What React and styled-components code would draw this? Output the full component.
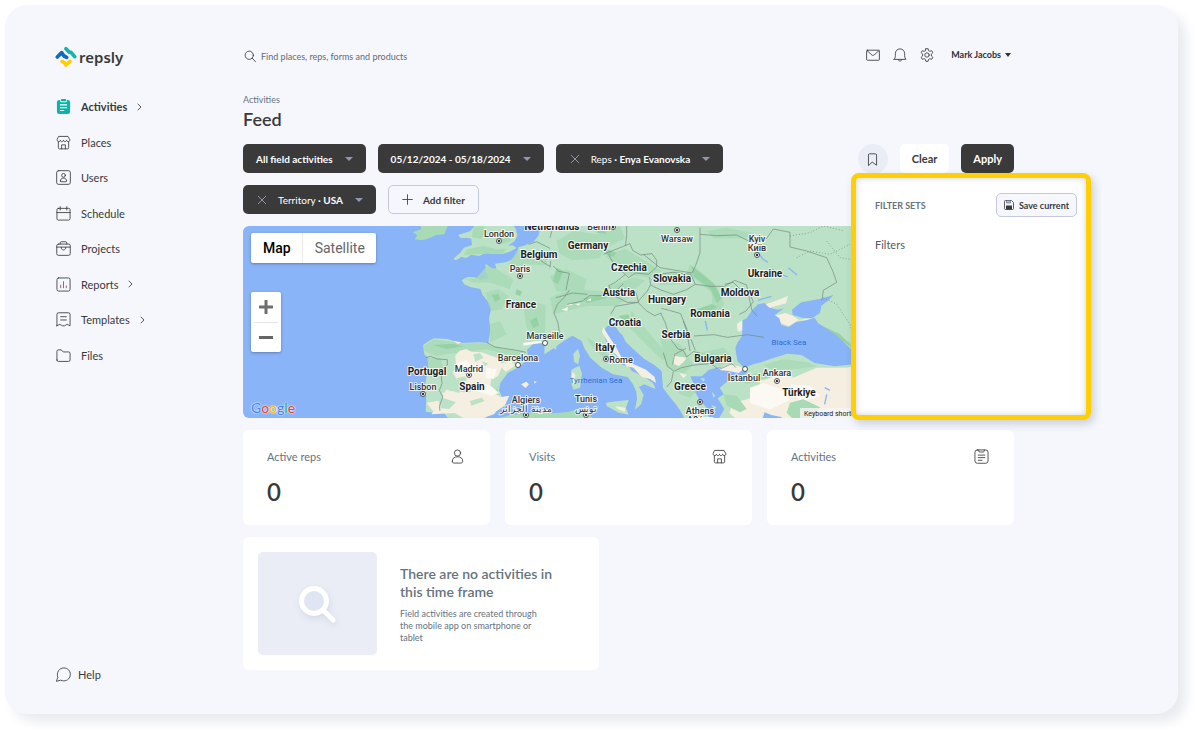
import styled, { createGlobalStyle, css } from 'styled-components'

const GlobalStyle = createGlobalStyle`
  *, *::before, *::after {
    box-sizing: border-box;
  }

  body {
    margin: 0;
    background: #ffffff;
    color: #3a3a3a;
    font-family: Lato, 'Liberation Sans', sans-serif;
    font-size: 11px;
  }

  button, input {
    font-family: inherit;
  }
`

const Page = styled.div`
  display: flex;
  min-height: 100vh;
  padding: 5px 24px 25px 5px;
`

const AppShell = styled.div`
  display: flex;
  flex: 1;
  min-width: 0;
  padding: 39px 164px 28px 50px;
  border-radius: 22px;
  background: #f5f7fd;
  box-shadow: 8px 8px 12px #e9ebf0;
`

/**
 * Sidebar
 */
const Sidebar = styled.aside`
  display: flex;
  flex-direction: column;
  width: 188px;
  flex-shrink: 0;
`

const Logo = styled.a`
  display: flex;
  align-items: center;
  gap: 2px;
  height: 25px;
  color: #3a3a3a;
  font-family: 'Noto Sans', sans-serif;
  font-size: 15px;
  font-weight: 600;
  line-height: 20px;
  text-decoration: none;
`

const NavList = styled.ul`
  display: grid;
  grid-auto-rows: 1fr;
  height: 284px;
  margin: 20px 0 0;
  padding: 0 0 0 1px;
  list-style: none;
`

const NavLink = styled.a`
  display: flex;
  align-items: center;
  height: 100%;
  gap: 10px;
  color: #3a3a3a;
  font-size: 11px;
  font-weight: ${({ $active }) => ($active ? 700 : 400)};
  text-decoration: none;
`

const HelpLink = styled(NavLink)`
  height: 24px;
  margin-top: auto;
  padding-left: 1px;
  gap: 7px;
`

const Icon = styled.svg`
  display: block;
  flex-shrink: 0;
  fill: none;
  stroke: currentColor;
  stroke-opacity: 0.85;
  stroke-linecap: round;
  stroke-linejoin: round;
`

/**
 * Main column
 */
const Main = styled.main`
  flex: 1;
  min-width: 0;
`

const TopBar = styled.header`
  display: flex;
  align-items: center;
  justify-content: space-between;
  height: 24px;
`

const SearchLabel = styled.label`
  display: flex;
  align-items: center;
  gap: 5px;
  padding-left: 1px;
  color: #3a3a3a;
`

const SearchInput = styled.input`
  width: 240px;
  padding: 0;
  border: 0;
  outline: 0;
  background: transparent;
  color: #5f6c77;
  font-size: 9px;

  &::placeholder {
    color: #5f6c77;
    opacity: 1;
  }
`

const TopActions = styled.div`
  display: flex;
  align-items: center;
  gap: 13px;
  padding: 0 1px 3px 0;
`

const IconButton = styled.button`
  display: flex;
  padding: 0;
  border: 0;
  background: none;
  color: #3a3a3a;
`

const UserButton = styled.button`
  display: flex;
  align-items: center;
  gap: 4px;
  margin-left: 4px;
  padding: 0 2px 0 0;
  border: 0;
  background: none;
  color: #2f3237;
  font-size: 9px;
  font-weight: 700;
`

const Breadcrumb = styled.div`
  margin-top: 25px;
  color: #66737e;
  font-size: 9px;
  line-height: 14px;
`

const PageTitle = styled.h1`
  margin: 0 0 13px;
  font-size: 18px;
  font-weight: 600;
  line-height: 24px;
`

const Toolbar = styled.div`
  display: flex;
  justify-content: space-between;
  align-items: flex-start;
  gap: 12px;
`

const Filters = styled.div`
  display: flex;
  flex: 1;
  flex-wrap: wrap;
  gap: 12px;
`

const Actions = styled.div`
  position: relative;
  display: flex;
  gap: 12px;
`

const variants = {
  dark: css`
    background: #3a3a3a;
    color: #ffffff;
  `,
  light: css`
    background: #ffffff;
    color: #3a3a3a;
  `,
  outline: css`
    border: 1px solid #c3c8de;
    color: #3a3a3a;
  `,
}

const Button = styled.button`
  display: flex;
  align-items: center;
  gap: 10px;
  height: 29px;
  padding: 0 12px;
  border: 0;
  border-radius: 5px;
  background: transparent;
  font-size: 11px;
  font-weight: 700;
  white-space: nowrap;
  ${({ $variant }) => variants[$variant]}
`

const FilterButton = styled(Button)`
  padding: 0 13px;
  font-size: 10px;

  svg {
    color: ${({ $variant }) => ($variant === 'dark' ? '#a4a7b8' : '#3a3a3a')};
  }
`

const FilterName = styled.span`
  font-weight: 400;
`

const Caret = styled.span`
  margin-left: ${({ $tight }) => ($tight ? 0 : '2px')};
  border: 4px solid transparent;
  border-width: ${({ $tight }) => ($tight ? '4px 3px 0' : '4px 4px 0')};
  border-top-color: ${({ $color }) => $color || '#9296ae'};
`

const RoundButton = styled(IconButton)`
  align-items: center;
  justify-content: center;
  width: 30px;
  height: 30px;
  border-radius: 50%;
  background: #eaedf6;
`

/**
 * Saved filter sets popover
 */
const Popover = styled.section`
  position: absolute;
  z-index: 2;
  top: 29px;
  right: -77px;
  width: 240px;
  height: 247px;
  padding: 15px 9px 15px 19px;
  border: 5px solid #ffcf03;
  border-radius: 8px;
  background: #ffffff;
  box-shadow: inset 0 0 6px rgba(40, 45, 70, 0.22), 3px 4px 8px rgba(40, 45, 70, 0.2);
`

const PopoverHeader = styled.div`
  display: flex;
  align-items: center;
  justify-content: space-between;
  height: 24px;
`

const PopoverTitle = styled.h2`
  margin: 0;
  color: #66737e;
  font-size: 9px;
  font-weight: 700;
`

const SaveButton = styled(Button)`
  gap: 5px;
  height: 24px;
  padding: 0 7px;
  background: #f5f7fd;
  font-size: 9px;
`

const PopoverItem = styled.p`
  margin: 20px 0 0;
  color: #55585e;
  font-size: 11px;
  line-height: 16px;
`

/**
 * Map
 */
const MapFrame = styled.section`
  display: grid;
  height: 192px;
  margin: 12px 0;
  border-radius: 6px;
  overflow: hidden;
  background: #8ab4f8;

  > * {
    grid-area: 1 / 1;
    min-width: 0;
    min-height: 0;
  }
`

const MapSvg = styled.svg`
  display: block;
  width: 100%;
  height: 192px;
`

const MapControls = styled.div`
  display: flex;
  flex-direction: column;
  align-items: flex-start;
  z-index: 1;
  padding: 7px 8px 1px;
`

const MapTypes = styled.div`
  display: flex;
  border-radius: 2px;
  background: #ffffff;
  box-shadow: 0 1px 3px rgba(0, 0, 0, 0.3);
`

const MapType = styled.button`
  height: 30px;
  padding: 0 11px 0 12px;
  border: 0;
  border-left: ${({ $active }) => ($active ? 0 : '1px solid #ececec')};
  background: none;
  color: ${({ $active }) => ($active ? '#000000' : '#666666')};
  font-family: Roboto, sans-serif;
  font-size: 14px;
  font-weight: ${({ $active }) => ($active ? 500 : 400)};
`

const Zoom = styled.div`
  display: flex;
  flex-direction: column;
  width: 30px;
  margin-top: 29px;
  padding: 0 3px;
  border-radius: 2px;
  background: #ffffff;
  box-shadow: 0 1px 3px rgba(0, 0, 0, 0.3);
`

const ZoomButton = styled.button`
  display: flex;
  align-items: center;
  justify-content: center;
  height: 30px;
  padding: 0;
  border: 0;
  background: none;
  color: #555555;

  & + & {
    border-top: 1px solid #e6e6e6;
  }
`

const GoogleMark = styled.span`
  margin-top: auto;
  font-family: Lato, sans-serif;
  font-size: 14px;
  font-weight: 500;
  line-height: 18px;
  text-shadow: 0 0 1px #ffffff, 0 0 2px #ffffff;
`

const Letter = styled.span`
  color: ${({ $color }) => $color};
`

/**
 * Stat cards and empty state
 */
const Stats = styled.div`
  display: grid;
  grid-template-columns: repeat(3, 1fr);
  gap: 15px;
`

const Card = styled.section`
  border-radius: 6px;
  background: #ffffff;
`

const StatCard = styled(Card)`
  height: 95px;
  padding: 18px 25px 0 24px;
`

const StatHeader = styled.div`
  display: flex;
  align-items: center;
  justify-content: space-between;
  height: 16px;
  color: #66737e;
`

const StatIcon = styled.span`
  color: #3a3a3a;
`

const StatValue = styled.div`
  margin-top: 12px;
  font-size: 24px;
  font-weight: 600;
  line-height: 32px;
`

const EmptyCard = styled(Card)`
  display: flex;
  gap: 23px;
  width: 356px;
  margin-top: 12px;
  padding: 15px;
`

const EmptyArt = styled.div`
  display: flex;
  align-items: center;
  justify-content: center;
  width: 119px;
  height: 103px;
  border-radius: 5px;
  background: #eaedf6;
`

const EmptyTitle = styled.h2`
  margin: 13px 0 7px;
  width: 160px;
  color: #66737e;
  font-size: 14px;
  font-weight: 600;
  line-height: 18px;
`

const EmptyText = styled.p`
  width: 144px;
  margin: 0;
  color: #66737e;
  font-size: 9px;
  line-height: 12px;
`

const icons = {
  store: (
    <>
      <path d="M3.2 1.500h9.600l2 3.600c0 1.200-.8 2-1.800 2s-1.700-.8-1.700-1.800c0 1-.7 1.800-1.700 1.800S8 6.300 8 5.300c0 1-.6 1.800-1.600 1.800S4.700 6.300 4.700 5.300c0 1-.7 1.800-1.700 1.800s-1.800-.8-1.800-2z" />
      <path d="M2.500 7.200v6.300a1.300 1.300 0 0 0 1.300 1.300h8.400a1.300 1.300 0 0 0 1.300-1.300V7.200M6 14.700v-4.200h4v4.200" />
    </>
  ),
  user: (
    <>
      <rect x="0.700" y="0.700" width="14.600" height="14.600" rx="2" />
      <circle cx="8" cy="5.700" r="2" />
      <path d="M4.700 11.800c0-2 1.300-3.100 3.300-3.100s3.300 1.100 3.300 3.100c0 .5-.3.700-.8.700h-5c-.5 0-.8-.2-.8-.700z" />
    </>
  ),
  calendar: (
    <>
      <rect x="1" y="2.500" width="14" height="12.500" rx="1.500" />
      <path d="M1 7h14M4.500.7v3.600M11.500.7v3.600" />
    </>
  ),
  briefcase: (
    <>
      <rect x="0.800" y="3.300" width="14.400" height="12" rx="1.800" />
      <path d="M4.500 3V2a1.200 1.200 0 0 1 1.200-1.200h4.600A1.200 1.200 0 0 1 11.500 2v1M.8 6.500h14.400M5.500 6.700c0 1.800 1 2.800 2.500 2.800s2.500-1 2.500-2.800" />
    </>
  ),
  chart: (
    <>
      <rect x="1" y="1" width="14" height="14" rx="1.800" />
      <path stroke="#8c4668" d="M5 11.500V8.700M8 11.500V5M11 11.500v-2" />
    </>
  ),
  template: (
    <>
      <path d="M1 14.700V2.500A1.700 1.700 0 0 1 2.700.8h10.600A1.700 1.700 0 0 1 15 2.500v12.200c-1.300 0-1.800-1.500-3.200-1.500-1.300 0-1.500 1.500-2.500 1.500h-2.600c-1 0-1.200-1.500-2.500-1.500-1.400 0-1.900 1.500-3.200 1.500z" />
      <path d="M5 5h6M5 8.500h6" />
    </>
  ),
  folder: <path d="M1 12.800V3.500A1.500 1.500 0 0 1 2.500 2h3.200l2 2.200h5.800A1.500 1.500 0 0 1 15 5.700v7.100a1.500 1.500 0 0 1-1.500 1.500h-11A1.500 1.500 0 0 1 1 12.800z" />,
  help: <path d="M1.800 10.700C.2 5.800 3.300 1 8.300 1c4 0 7 3 7 6.800 0 4-3 7-7 7-1.300 0-2.300-.3-3.200-.8L.8 15.200z" />,
  mail: (
    <>
      <rect x="0.700" y="2.500" width="14.600" height="11.500" rx="1" />
      <path d="m1.200 3 5.600 5c.8.600 1.600.6 2.400 0l5.600-5" />
    </>
  ),
  bell: <path d="M1.200 13h13.600c-1-1-1.500-2.300-1.500-4.300V6.500C13.300 3.300 11 1 8 1S2.700 3.300 2.700 6.500v2.200c0 2-.5 3.300-1.500 4.300zM6 13.300c.2 2.400 3.800 2.400 4 0" />,
  gear: (
    <>
      <circle cx="8" cy="8" r="2.500" />
      <path d="M6.700.8h2.600l.5 2.200 1.400.8 2.200-.7 1.300 2.300-1.700 1.500v2.200l1.700 1.500-1.300 2.300-2.200-.7-1.400.8-.5 2.200H6.700L6.200 13l-1.400-.8-2.200.7-1.300-2.300L3 9.100V6.900L1.300 5.400l1.300-2.300 2.200.7L6.200 3z" />
    </>
  ),
  search: (
    <>
      <circle cx="7" cy="7" r="5.500" />
      <path d="m11 11 4.300 4.500" />
    </>
  ),
  person: (
    <>
      <circle cx="8" cy="4.300" r="3.300" />
      <path d="M2.500 13c0-3.200 2-4.700 5.500-4.700s5.500 1.500 5.500 4.700c0 1.500-.5 2-2 2h-7c-1.500 0-2-.5-2-2z" />
    </>
  ),
  clipboard: (
    <>
      <rect x="1" y="1" width="14" height="14.200" rx="2.500" />
      <path d="M5 1v1c0 .8.500 1.200 1.200 1.200h3.600c.7 0 1.200-.4 1.200-1.200V1M4.500 6.500h7M4.500 9.200h7M4.500 12h4" />
    </>
  ),
  bookmark: <path d="M3 15V2.500A1.500 1.500 0 0 1 4.500 1h7A1.500 1.500 0 0 1 13 2.500V15l-5-3.500z" />,
  close: <path d="m3 3 10 10M13 3 3 13" />,
  plus: <path d="M8 1v14M1 8h14" />,
}

const LineIcon = ({ name, size = 15, weight = 1 }) => (
  <Icon width={size} height={size} viewBox="0 0 16 16" aria-hidden="true" style={{ strokeWidth: (weight * 16) / size }}>
    {icons[name]}
  </Icon>
)

const Chevron = () => (
  <Icon width="5" height="8" viewBox="0 0 5 8" aria-hidden="true">
    <path d="m1 1 3 3-3 3" />
  </Icon>
)

const ActiveClipboard = () => (
  <svg width="15" height="15" viewBox="0 0 16 16" aria-hidden="true">
    <rect x="1" y="1" width="14" height="15" rx="2.500" fill="#0cb3a8" />
    <rect x="4.500" y="0" width="7" height="3.400" rx="1" fill="#f5f7fd" />
    <rect x="5.300" y="0" width="5.400" height="2.500" rx="0.800" fill="#0cb3a8" />
    <path d="M4.200 6.300h7.600M4.200 9.200h7.600M4.200 12.200h4.500" stroke="#ffffff" strokeWidth="1.200" />
  </svg>
)

const LogoMark = () => (
  <svg width="22" height="22" viewBox="163 138 66 66" fill="none" strokeWidth="11" strokeLinecap="round" strokeLinejoin="round" aria-hidden="true">
    <path stroke="#12b5a6" d="M196 146l9 10 6 1 11 13" />
    <path stroke="#0f6cc0" d="M170 171l13-13 7 10 8 4" />
    <path stroke="#ffcf03" d="M184 184l7 4 5 7 12-11" />
  </svg>
)

const SaveIcon = () => (
  <svg width="10" height="10" viewBox="0 0 10 10" aria-hidden="true">
    <path d="M.5 1.500a1 1 0 0 1 1-1H7.500l2 2v6a1 1 0 0 1-1 1h-7a1 1 0 0 1-1-1z" fill="#f5f7fd" stroke="#3a3a3a" strokeOpacity="0.8" />
    <path d="M2.500.5h4v2.500h-4z" fill="#aebccf" stroke="#59626b" strokeWidth="0.600" />
    <path d="M2 5.500h6v4H2z" fill="#3a3a3a" />
  </svg>
)

const navItems = [
  { label: 'Activities', active: true, more: true },
  { label: 'Places', icon: 'store' },
  { label: 'Users', icon: 'user' },
  { label: 'Schedule', icon: 'calendar' },
  { label: 'Projects', icon: 'briefcase' },
  { label: 'Reports', icon: 'chart', more: true },
  { label: 'Templates', icon: 'template', more: true },
  { label: 'Files', icon: 'folder' },
]

const stats = [
  { label: 'Active reps', value: 0, icon: 'person' },
  { label: 'Visits', value: 0, icon: 'store' },
  { label: 'Activities', value: 0, icon: 'clipboard' },
]

const countries = [
  ['Netherlands', 309, 4],
  ['Belgium', 296, 32],
  ['Germany', 345, 23],
  ['Czechia', 386, 45],
  ['Slovakia', 429, 56],
  ['Austria', 376, 70],
  ['Hungary', 424, 77],
  ['France', 278, 82],
  ['Moldova', 497, 70],
  ['Ukraine', 522, 51],
  ['Romania', 467, 91],
  ['Croatia', 382, 100],
  ['Serbia', 433, 112],
  ['Italy', 362, 125],
  ['Bulgaria', 470, 136],
  ['Greece', 447, 164],
  ['Portugal', 184, 149],
  ['Spain', 229, 164],
  ['Türkiye', 556, 170],
]

const cities = [
  ['London', 256, 11, 256, 15],
  ['Paris', 277, 46, 277, 50],
  ['Berlin', 356, 4, 370, 1],
  ['Warsaw', 434, 16, 434, 4],
  ['Kyiv', 514, 16],
  ['Київ', 514, 25, 514, 29],
  ['Marseille', 302, 113, 302, 117],
  ['Barcelona', 275, 135, 275, 139],
  ['Madrid', 226, 146, 226, 149],
  ['Lisbon', 180, 164, 180, 168],
  ['Algiers', 283, 177],
  ['مدينة الجزائر', 283, 186, 283, 189],
  ['Rome', 378, 137, 363, 133],
  ['Tunis', 343, 176],
  ['تونس', 343, 186, 343, 189],
  ['Athens', 457, 188, 457, 176],
  ['Αθήνα', 457, 197],
  ['İstanbul', 501, 155, 502, 143],
  ['Ankara', 534, 150, 534, 155],
]

// coastal and second-tier towns get a plain ring, capitals a filled one
const towns = ['Marseille', 'Barcelona', 'İstanbul']

const Country = styled.text`
  fill: #1c1d1f;
  stroke: #ffffff;
  stroke-width: 2;
  stroke-opacity: 0.8;
  paint-order: stroke;
  font-family: Roboto, sans-serif;
  font-size: 10px;
  font-weight: 700;
  text-anchor: middle;
`

const City = styled(Country)`
  fill: #303236;
  font-size: 9px;
  font-weight: 500;
`

const Sea = styled(Country)`
  fill: #2d6fd2;
  stroke: none;
  font-size: 8px;
  font-weight: 400;
`

const MapNote = styled(Sea)`
  fill: #202124;
  font-size: 7px;
  text-anchor: start;
`

const EuropeMap = () => (
  <MapSvg viewBox="0 0 771 192" preserveAspectRatio="xMinYMin slice" role="img" aria-label="Map of Europe">
    <g transform="translate(-3 -5) scale(0.33333)">
      {/* British Isles */}
      <path fill="#a8dab5" d="M538 10l7 14-27 10 14 9-8 12 21 3 16-4 28-12 24-2 12-30z" />
      <path fill="#bbe2c6" d="M708 10l-10 12-8 9-36 11 9 10 18-2 13 4 2 18-24 8-10 14-22 20 8 4 16-10 15 3 14-10 24 4 22-10 14 3 37 0 22-7 18-10-12-8-14 1 20-14 8-16-4-20-11-14z" />
      <path fill="#a8dab5" d="M700 20l26-8 14 18-18 24-26-6zM680 85l50-10 40 10 30-2-10 12-70 4-50 4zM770 55l30-10 14 14-28 10z" />
      {/* France and Iberia */}
      <path
        fill="#bbe2c6"
        d="M905 10l-10 34-14 18-30 12-16 5-4 22-14 14-20 9-32 4 4 14-12 2-20-16 0 24 10 18-24 7-18-8-22-1-18 10 8 12 18 8 30 6 6 16 18 24 9 18-7 30 4 36-6 38-26-2-60 2-36-12-42-2-14 8-18 12 4 28 10 10 2 30-6 32-6 28 6 30-2 42 30 4 22-4 14 18 112 4 8-12 22-12 8-22 12-22-8-18 4-22 22-30 30-16 32-26-4-28 18-16 40-5 20 15 10 6V10z"
      />
      <path
        fill="#a8dab5"
        fillOpacity="0.8"
        d="M835 85l50 20 45 0v30l-70-5-30 20-25-20zM740 135l30 10 50 30-10 30-60-20-50 0-25-10 35-5zM735 215l40-10 30 20-20 40-32 5zM850 265l40-20 40 10v90l-40 15-30-40zM750 310l30-10 20 40-50 25zM552 375l30-20 80 12 75 0 60 18 58 5-6 20-50-10-60-15-90 10-60 10-35-15zM562 410l40 0 10 40-40 20zM775 495l-20 30-25 10 10 30 30-30z"
      />
      <path fill="#94d2a5" d="M755 222l20-4 6 16-16 8zM830 205l16 6-6 14-14-6zM690 402l26-5 10 12-26 14zM870 300l20-12 8 24-18 10zM580 372l60-4 30 8-50 8z" />
      <path
        fill="#f5efe2"
        d="M646 404l12-14 20-6 16 8 30 2 30 10 20 8 14 20-14 34-20 8-6 36 36 18 24-4-14 30-24 16-8 10-24 8-26 8-40-4-28-16-70 4 14-20 40 4 20-20-40-14 10-24 40 10 14-24-20-14-14-24 10-16zM606 515l38-4 8 12-34 10zM560 545l36-6 6 22-24 8zM775 430l40-10 10 14-28 18zM640 360l24 4-10 5z"
      />
      <path fill="#fcf8f2" d="M740 440l30 4-8 30-26-4zM700 485l50 8 26 22-20 10-44-14zM650 425l30-8 12 14-30 16zM850 365l50-6 10 5-60 10z" />
      <path fill="#bbe2c6" d="M670 500l26 6-10 10-24-4zM690 540l34-10 10 10-40 14zM725 420l20 8-10 8zM700 400l20-4 10 14-24 12zM650 472l24-6 8 12-26 8z" />
      <path fill="#f5efe2" d="M843 490l16-8 8 8-10 11zM882 480l8 2-6 6z" />
      {/* Algeria */}
      <path fill="#a8dab5" d="M762 596l40-12 54-7 80-12v31z" />

      <g transform="translate(930 0)">
        {/* Central and eastern Europe */}
        <path
          fill="#bbe2c6"
          d="M-5 10H1392V596H505l18-32-20-32 18-12-12-20 22-18 28-12 34-14-12-16-46 2-28-4-30 8-22 20-34 0 10 22-12 8 18 20 10 18 24 28 6 30-70 6-18-32-10-14-24-30-16-22-4-50-22-18-30-18-36-32-20-20-10-20-10-10-12-18-22 0-10 12 4 32 24 36 26 38 20 4 8 14 32 14 32 22 8 18-16-6-18-8-16 8 14 24-8 28-18 16 6-32-2-22-10-22-16-22-44-8-34-20-34-30-18-28-8-22-28-16-26 16-30 22-28 18z"
        />
        {/* Dark forests */}
        <path
          fill="#a8dab5"
          fillOpacity="0.8"
          d="M20 60l50-30 70 10 70-24 16 36-60 30-18 30-80 6-40-20zM0 165l50-20 60 30-10 40-80-4zM165 105l60-22 50 30 60 36-40 20-60-6zM175 195l80-26 30 10-50 40-60-10zM0 230l60-26 90 6 90 20-40 25-90 0-100 25zM300 165l80-16 40 24-20 16-70 4zM420 130l30 20 46 42 26 54-10 26-60 14-14-8 50-24-4-40-50-40-24-18zM245 270l30 40 60 70 20 36-20 0-60-60-40-40zM330 350l60 20 40 60-30 30-50-20zM430 400l90-20 30 30-40 24-70-6zM470 30l60-10 80 16-20 16-100 0zM370 480l40 10 30 20-20 20-30-10zM110 350l40 20 44 60-24-10-50-50zM810 310l100 60v30l-60-50zM640 432l60-18 70 10 30 12-60 8-70 4z"
        />
        <path
          fill="#94d2a5"
          d="M425 135l26 20 40 32 24 44-14 16-20-44-50-36zM440 265l46-16 16 10-40 18zM170 85l30 10-10 12-24-8zM20 140l20 10-16 40-16-10zM205 285l30-5 8 20-24-4zM100 232l60-10 10 10-60 14zM150 8l20 30-30-2zM820 316l50 24 40 40-50-30z"
        />
        {/* Alpine snow and dry coasts */}
        <path fill="#f7f4ec" d="M34 266l20-8-2 12zM48 254l16-8 4 6zM76 250l14-4-2 8zM110 238l14-6-2 8z" />
        <path
          fill="#f5efe2"
          d="M160 318l14 24 24 36 16 30 22 6 12 14 40 18 26 22 4 18-18-12-24-6-26-28-20-4-40-44-34-60zM560 310l16-12 4 30-16 4zM370 404l40 6-10 14-14 12-16-8zM386 454l24 8-10 10zM628 255l40-12 46-18-6 22-60 16zM676 284l30-8 22 8 18 12-30 20-24-10zM500 446l36-16 50 10-20 16-30-6zM738 298l46-6 0 8z"
        />
        {/* Turkey plateau */}
        <path fill="#f5efe2" d="M620 470l50-14 60 14 70-30 90 0 90-20V596H560l-22-20 10-30 60-16 30-30z" />
        <path fill="#fcf8f2" d="M600 500l40-14 60 20 20 30-60 30-60-20zM720 490l60 4 30 30-60 20z" />
        <path fill="#a8dab5" d="M520 520l40 4 30 40-20 10-40-20zM720 545l40-10 50 24-20 36-60 0-20-20zM560 470l70-14 60 4-40 14-60 14z" />
        <path fill="#8ab4f8" d="M636 596l8-22 20 8 30 6 6 8z" />
        {/* Black Sea and Azov */}
        <path
          fill="#8ab4f8"
          d="M582 440l-20-20-6-40 6-14 14-22 2-46 12-6 16-24 18-18 20-4 14 14 26 6 18-4-28 20 14 10 6 20 22 6 22-14 30-6 26-8 10 16 50 34 30 26 30 30 0 34-60 6-60-10-40-24-42-4-40 12-38 14-24 6z"
        />
        <path fill="#8ab4f8" d="M728 282l-2-16 28-22 54-10 42-12-14 16-22 16-4 22-24 16-30-2-14-4zM534 466l18-4 10 6-16 6z" />
        {/* Lakes and rivers */}
        <path fill="none" stroke="#8ab4f8" strokeWidth="4" d="M620 88l18 26 16 10M664 144l30 16 20 8M715 140l26 22M624 238l40-12M466 300l6 28M830 520l-6 30M824 500l16 8" />
        {/* Islands */}
        <path fill="#bbe2c6" d="M70 398l14-14 6 20-6 26-12-8zM64 446l24-12 8 24-6 42-20 6-8-24zM168 545l30-4 38-4-8 24 8 20-30-6-36-20zM484 552l16 6-8 8zM452 470l14 4-6 8zM486 512l10 12-6 6z" />
        <path fill="#f5efe2" d="M68 452l8 10-4 30-8-20zM196 556l30 4-2 12-20-8z" />
        {/* Tunisia */}
        <path fill="#a8dab5" d="M-5 578l60-5 26-8 24-2 18 4-4 16 14 13H-5z" />
      </g>

      {/* Borders */}
      <g fill="none" stroke="#72877c" strokeWidth="2" strokeLinejoin="round">
        <path d="M740 364l24 14 40 6 26 4 28 6M558 410l14-4 20 8 30 2 0 16-14 12-4 24 2 20-8 20 10 20-10 28 2 14M866 70l24-8 40 20M890 110l20 14 20 12M930 140l2-20" />
        <path d="M930 50l10-36M940 135l16 16 32 6-10 50M988 208l-16 22-20 20-10 26 12 30 6 40M948 230l50-14 44 4M982 250l46-10 20-16 36 0 20-16 26 0 20-20M1090 100l60-24 20-8 8 20 24 14 34-4 14 20 0 20-24 22-40-4-20 14-26-24-24-26-10-20M1160 15l0 30-4 30M1210 100l50 40 60 10 36 6 10-20 14-40 0-76M1156 160l-30 24-20 10 16 30 40 20 30 0 30-34 10-20-4-22M1234 176l20-16 44-6 54 6 14 30-26 16-40 14-40-14-28-14M1194 244l26 26 24 14 20-8M1186 210l10 34-70 12-14 24M1366 190l44 6 44 0 30-18 36 14 10 50 6 26 16 18M1454 190l26-6 20 20 26 8 14 30-22 28-20 10M1380 40l50 4 60-2 40 20 50-10 20-28 50 10 0 44 50 12 60 20 20 44 10 30-40 24-4 30M1262 276l14 30 14 46 24 32 16 4 10 20 20-16 20 4M1264 262l24 6 34 10 24 60 20 50M1362 345l60-4 40 8 60-8 50 8M1270 395l12 40 20 16 20-10 34-8 60-6M1350 390l-10-60-10-30M1300 452l-6 30-14 16M1416 430l20 16 40-18 12 12M1298 430l6-30 34-18" />
        <path strokeDasharray="3 6" d="M1650 45l60-10 40-20 60 14M1670 110l40-20 60 10 60-30M1750 230l40 20 40 60 12 50M1760 60l40 50 60 10" />
      </g>
    </g>

    {cities.map(([name, , , px, py]) => px && (
      <g key={name}>
        <circle cx={px} cy={py} r="2.500" fill="#ffffff" stroke="#2c2d30" strokeWidth="0.800" />
        {!towns.includes(name) && <circle cx={px} cy={py} r="1.200" fill="#2c2d30" />}
      </g>
    ))}
    {cities.map(([name, x, y]) => (
      <City key={name} x={x} y={y}>{name}</City>
    ))}
    {countries.map(([name, x, y]) => (
      <Country key={name} x={x} y={y}>{name}</Country>
    ))}
    <Sea x="546" y="119">Black Sea</Sea>
    <Sea x="353" y="157">Tyrrhenian Sea</Sea>
    <rect x="557" y="182" width="80" height="10" fill="#f5f5f5" fillOpacity="0.8" />
    <MapNote x="561" y="190">Keyboard shortcuts</MapNote>
  </MapSvg>
)

export default function App() {
  return (
    <>
      <GlobalStyle />
      <Page>
        <AppShell>
          <Sidebar>
            <Logo href="#">
              <LogoMark />
              repsly
            </Logo>
            <nav>
              <NavList>
                {navItems.map(({ label, icon, active, more }) => (
                  <li key={label}>
                    <NavLink href="#" $active={active}>
                      {active ? <ActiveClipboard /> : <LineIcon name={icon} />}
                      {label}
                      {more && <Chevron />}
                    </NavLink>
                  </li>
                ))}
              </NavList>
            </nav>
            <HelpLink href="#">
              <LineIcon name="help" />
              Help
            </HelpLink>
          </Sidebar>

          <Main>
            <TopBar>
              <SearchLabel>
                <LineIcon name="search" size={12} />
                <SearchInput type="search" aria-label="Search" placeholder="Find places, reps, forms and products" />
              </SearchLabel>
              <TopActions>
                <IconButton aria-label="Messages"><LineIcon name="mail" size={14} /></IconButton>
                <IconButton aria-label="Notifications"><LineIcon name="bell" size={14} /></IconButton>
                <IconButton aria-label="Settings"><LineIcon name="gear" size={14} /></IconButton>
                <UserButton>
                  Mark Jacobs
                  <Caret $tight $color="#2f3237" />
                </UserButton>
              </TopActions>
            </TopBar>

            <Breadcrumb>Activities</Breadcrumb>
            <PageTitle>Feed</PageTitle>

            <Toolbar>
              <Filters>
                <FilterButton $variant="dark">
                  All field activities
                  <Caret />
                </FilterButton>
                <FilterButton $variant="dark">
                  05/12/2024 - 05/18/2024
                  <Caret />
                </FilterButton>
                <FilterButton $variant="dark">
                  <LineIcon name="close" size={12} />
                  <span><FilterName>Reps</FilterName> · Enya Evanovska</span>
                  <Caret />
                </FilterButton>
                <FilterButton $variant="dark">
                  <LineIcon name="close" size={12} />
                  <span><FilterName>Territory</FilterName> · USA</span>
                  <Caret />
                </FilterButton>
                <FilterButton $variant="outline">
                  <LineIcon name="plus" size={11} />
                  Add filter
                </FilterButton>
              </Filters>
              <Actions>
                <RoundButton aria-label="Filter sets"><LineIcon name="bookmark" size={13} /></RoundButton>
                <Button $variant="light">Clear</Button>
                <Button $variant="dark">Apply</Button>
                <Popover>
                  <PopoverHeader>
                    <PopoverTitle>FILTER SETS</PopoverTitle>
                    <SaveButton $variant="outline">
                      <SaveIcon />
                      Save current
                    </SaveButton>
                  </PopoverHeader>
                  <PopoverItem>Filters</PopoverItem>
                </Popover>
              </Actions>
            </Toolbar>

            <MapFrame>
              <EuropeMap />
              <MapControls>
                <MapTypes>
                  <MapType $active>Map</MapType>
                  <MapType>Satellite</MapType>
                </MapTypes>
                <Zoom>
                  <ZoomButton aria-label="Zoom in"><LineIcon name="plus" size={14} weight={3} /></ZoomButton>
                  <ZoomButton aria-label="Zoom out">
                    <svg width="14" height="3" aria-hidden="true"><rect width="14" height="3" fill="#666666" /></svg>
                  </ZoomButton>
                </Zoom>
                <GoogleMark>
                  <Letter $color="#4285f4">G</Letter>
                  <Letter $color="#ea4335">o</Letter>
                  <Letter $color="#fbbc04">o</Letter>
                  <Letter $color="#4285f4">g</Letter>
                  <Letter $color="#34a853">l</Letter>
                  <Letter $color="#ea4335">e</Letter>
                </GoogleMark>
              </MapControls>
            </MapFrame>

            <Stats>
              {stats.map(({ label, value, icon }) => (
                <StatCard key={label}>
                  <StatHeader>
                    {label}
                    <StatIcon><LineIcon name={icon} /></StatIcon>
                  </StatHeader>
                  <StatValue>{value}</StatValue>
                </StatCard>
              ))}
            </Stats>

            <EmptyCard>
              <EmptyArt>
                <svg width="48" height="48" viewBox="0 0 48 48" fill="none" aria-hidden="true" style={{ filter: 'drop-shadow(1px 3px 3px #d5d9e6)' }}>
                  <circle cx="20" cy="21" r="12.500" fill="#e0e5f3" stroke="#ffffff" strokeWidth="5" />
                  <path d="m30 31 9 9" stroke="#ffffff" strokeWidth="5" strokeLinecap="round" />
                </svg>
              </EmptyArt>
              <div>
                <EmptyTitle>There are no activities in this time frame</EmptyTitle>
                <EmptyText>Field activities are created through the mobile app on smartphone or tablet</EmptyText>
              </div>
            </EmptyCard>
          </Main>
        </AppShell>
      </Page>
    </>
  )
}
